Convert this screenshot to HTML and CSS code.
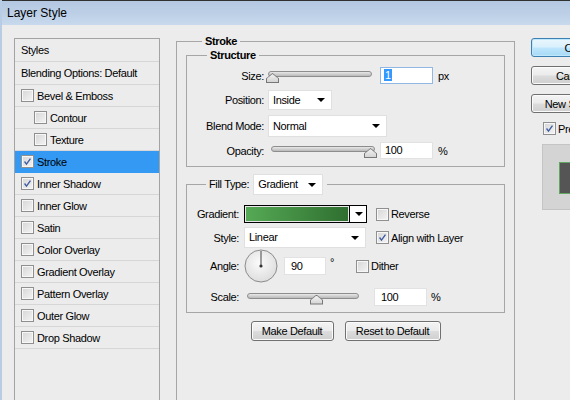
FILE: index.html
```html
<!DOCTYPE html>
<html>
<head>
<meta charset="utf-8">
<title>Layer Style</title>
<link rel="stylesheet" href="styles.css">
</head>
<body>
<div class="window">
  <div class="titlebar">Layer Style</div>
  <div class="content">
    <div class="styles-list">
      <div class="item head first">Styles</div>
      <div class="item head">Blending Options: Default</div>
      <div class="item"><span class="cb"></span>Bevel &amp; Emboss</div>
      <div class="item sub"><span class="cb"></span>Contour</div>
      <div class="item sub"><span class="cb"></span>Texture</div>
      <div class="item selected"><span class="cb checked"><svg viewBox="0 0 13 13"><path d="M3 6.5 L5.3 9.5 L10 3" fill="none" stroke="#3d5ca0" stroke-width="1.6"/></svg></span>Stroke</div>
      <div class="item"><span class="cb checked"><svg viewBox="0 0 13 13"><path d="M3 6.5 L5.3 9.5 L10 3" fill="none" stroke="#3d5ca0" stroke-width="1.6"/></svg></span>Inner Shadow</div>
      <div class="item"><span class="cb"></span>Inner Glow</div>
      <div class="item"><span class="cb"></span>Satin</div>
      <div class="item"><span class="cb"></span>Color Overlay</div>
      <div class="item"><span class="cb"></span>Gradient Overlay</div>
      <div class="item"><span class="cb"></span>Pattern Overlay</div>
      <div class="item"><span class="cb"></span>Outer Glow</div>
      <div class="item"><span class="cb"></span>Drop Shadow</div>
    </div>

    <div class="main">
      <fieldset class="group stroke">
        <legend class="legend-stroke">Stroke</legend>
        <fieldset class="group structure">
          <legend class="legend-structure">Structure</legend>
          <div class="row r-size">
            <span class="lbl lbl-s">Size:</span>
            <div class="slider sl-size"><span class="track"></span><span class="thumb thumb-min"></span></div>
            <span class="field f-size focused"><span class="sel-text">1</span></span>
            <span class="unit">px</span>
          </div>
          <div class="row r-pos">
            <span class="lbl lbl-s">Position:</span>
            <span class="select s-pos">Inside<span class="arrow"></span></span>
          </div>
          <div class="row r-blend">
            <span class="lbl lbl-s">Blend Mode:</span>
            <span class="select s-blend">Normal<span class="arrow"></span></span>
          </div>
          <div class="row r-op">
            <span class="lbl lbl-s">Opacity:</span>
            <div class="slider sl-op"><span class="track"></span><span class="thumb thumb-max"></span></div>
            <span class="field f-op">100</span>
            <span class="unit">%</span>
          </div>
        </fieldset>

        <fieldset class="group fill">
          <legend class="legend-fill"><span class="fill-lbl">Fill Type:</span><span class="select s-fill">Gradient<span class="arrow"></span></span></legend>
          <div class="row r-grad">
            <span class="lbl lbl-f">Gradient:</span>
            <span class="gradient"><span class="grad-swatch"></span><span class="grad-btn"><span class="arrow"></span></span></span>
            <span class="check-opt"><span class="cb"></span>Reverse</span>
          </div>
          <div class="row r-style">
            <span class="lbl lbl-f">Style:</span>
            <span class="select s-style">Linear<span class="arrow"></span></span>
            <span class="check-opt"><span class="cb checked"><svg viewBox="0 0 13 13"><path d="M3 6.5 L5.3 9.5 L10 3" fill="none" stroke="#3d5ca0" stroke-width="1.6"/></svg></span>Align with Layer</span>
          </div>
          <div class="row r-angle">
            <span class="lbl lbl-f">Angle:</span>
            <span class="dial"><svg viewBox="0 0 34 34" width="34" height="34"><defs><radialGradient id="dg" cx="0.45" cy="0.4" r="0.7"><stop offset="0" stop-color="#fbfbfb"/><stop offset="1" stop-color="#d9d9d9"/></radialGradient></defs><circle cx="17" cy="17" r="16" fill="url(#dg)" stroke="#8c8c8c"/><line x1="17" y1="17" x2="17" y2="2" stroke="#444" stroke-width="1"/><circle cx="17" cy="17" r="1.6" fill="#333"/></svg></span>
            <span class="field f-angle">90</span>
            <span class="deg">°</span>
            <span class="check-opt dither"><span class="cb"></span>Dither</span>
          </div>
          <div class="row r-scale">
            <span class="lbl lbl-f">Scale:</span>
            <div class="slider sl-scale"><span class="track"></span><span class="thumb thumb-scale"></span></div>
            <span class="field f-scale">100</span>
            <span class="unit">%</span>
          </div>
        </fieldset>

        <div class="btnrow">
          <button class="btn b-make">Make Default</button>
          <button class="btn b-reset">Reset to Default</button>
        </div>
      </fieldset>
    </div>

    <div class="side">
      <button class="btn side-btn ok">OK</button>
      <button class="btn side-btn">Cancel</button>
      <button class="btn side-btn">New Style...</button>
      <div class="preview-check"><span class="cb checked"><svg viewBox="0 0 13 13"><path d="M3 6.5 L5.3 9.5 L10 3" fill="none" stroke="#3d5ca0" stroke-width="1.6"/></svg></span>Preview</div>
      <div class="preview-box"><span class="preview-swatch"></span></div>
    </div>
  </div>
</div>
</body>
</html>
```

FILE: styles.css
```css
* { box-sizing: border-box; }
html, body {
  margin: 0;
  padding: 0;
  width: 570px;
  height: 400px;
  overflow: hidden;
  background: #ececec;
  font-family: "Liberation Sans", Arial, sans-serif;
  font-size: 11px;
  letter-spacing: -0.35px;
  color: #000;
}
.window {
  width: 570px;
  height: 400px;
  display: flex;
  flex-direction: column;
  border-left: 2px solid #b8cce4;
  background: #ececec;
  overflow: hidden;
}
.titlebar {
  flex: none;
  height: 25px;
  border-top: 1px solid #303030;
  background: linear-gradient(to bottom, #b3c8e1 0%, #bccfe6 50%, #c8d9ed 100%);
  font-family: "Liberation Sans", Arial, sans-serif;
  font-size: 12px;
  letter-spacing: 0;
  line-height: 24px;
  padding-left: 5px;
  color: #000;
}
.content {
  flex: 1;
  display: flex;
  align-items: flex-start;
  min-height: 0;
}

/* left list */
.styles-list {
  flex: none;
  width: 146px;
  height: 362px;
  margin-left: 12px;
  margin-top: 13px;
  border: 1px solid #a3a3a3;
  border-bottom: 0;
}
.item {
  height: 22px;
  border-bottom: 1px solid #d6d6d6;
  display: flex;
  align-items: center;
  padding-left: 6px;
  white-space: nowrap;
}
.item.head { height: 23px; }
.item.sub { padding-left: 19px; }
.item.selected { background: #3399f3; border-bottom-color: #3399f3; }
.cb {
  flex: none;
  width: 13px;
  height: 13px;
  border: 1px solid #8f8f8f;
  background: linear-gradient(135deg, #d6d6d6 0%, #f4f4f4 100%);
  box-shadow: inset 0 0 0 1px #f7f7f7;
  margin-right: 3px;
  display: inline-block;
}
.cb svg { width: 11px; height: 11px; display: block; }
.item .cb { margin-right: 3px; }

/* main */
.main {
  flex: none;
  margin-left: 16px;
  margin-top: 10px;
  width: 339px;
}
fieldset.group {
  margin: 0;
  border: 1px solid #a6a6a6;
  min-width: 0;
}
legend {
  font-weight: bold;
  font-size: 11px;
  line-height: 13px;
  padding: 0 3px;
}
.stroke {
  padding: 1px 9px 0 9px;
  height: 380px;
}
.legend-stroke { margin-left: 16px; }
.structure {
  padding: 5px 0 7px 0;
}
.legend-structure { margin-left: 20px; }
.fill {
  margin-top: 7px !important;
  padding: 10px 0 6px 0;
}
.legend-fill {
  margin-left: 19px;
  font-weight: normal;
  display: flex;
  align-items: center;
  padding: 0 4px 0 3px;
}
.fill-lbl { margin-right: 4px; }

.row {
  display: flex;
  align-items: center;
}
.lbl { text-align: right; flex: none; white-space: nowrap; }
.lbl-s { width: 77px; margin-right: 4px; }
.lbl-f { width: 52px; margin-right: 5px; }

.r-size { height: 17px; }
.r-pos { height: 20px; margin-top: 6px; }
.r-blend { height: 22px; margin-top: 5px; }
.r-op { height: 17px; margin-top: 5px; }

.slider {
  position: relative;
  flex: none;
  height: 17px;
}
.track {
  position: absolute;
  left: 0;
  right: 0;
  top: 4px;
  height: 6px;
  border: 1px solid #8d8d8d;
  border-radius: 3px;
  background: linear-gradient(to bottom, #e8e8e8, #b9b9b9);
}
.thumb {
  position: absolute;
  top: 6px;
  width: 13px;
  height: 10px;
}
.thumb::before {
  content: "";
  position: absolute;
  inset: 0;
  background: #777;
  clip-path: polygon(50% 0, 100% 55%, 100% 100%, 0 100%, 0 55%);
}
.thumb::after {
  content: "";
  position: absolute;
  inset: 1px;
  background: linear-gradient(to bottom, #f2f2f2, #d4d4d4);
  clip-path: polygon(50% 0, 100% 55%, 100% 100%, 0 100%, 0 55%);
}
.sl-size { width: 104px; }
.thumb-min { left: -2px; }
.sl-op { width: 104px; margin-left: 3px; margin-right: -3px; }
.thumb-max { right: -2px; }
.sl-scale { width: 112px; margin-left: 3px; }
.thumb-scale { left: 63px; }

.field {
  flex: none;
  height: 17px;
  background: #fff;
  border: 1px solid #e2e2e2;
  padding-left: 4px;
  line-height: 15px;
}
.f-size { width: 53px; margin-left: 8px; border-color: #8fb8e5; }
.sel-text { background: #3399ff; color: #fff; padding: 0 1px; margin-left: -1px; }
.f-op { width: 53px; margin-left: 8px; }
.unit { margin-left: 5px; }

.select {
  flex: none;
  position: relative;
  background: #fff;
  border: 1px solid #e0e0e0;
  height: 20px;
  line-height: 18px;
  padding-left: 4px;
  display: inline-block;
}
.arrow {
  position: absolute;
  right: 6px;
  top: 50%;
  margin-top: -2px;
  width: 0;
  height: 0;
  border-left: 4px solid transparent;
  border-right: 4px solid transparent;
  border-top: 4px solid #000;
}
.s-pos { width: 64px; }
.s-blend { width: 119px; height: 22px; line-height: 20px; }
.s-fill { width: 70px; height: 21px; line-height: 19px; }
.s-style { width: 122px; height: 21px; line-height: 19px; }

.r-grad { height: 18px; }
.r-style { height: 21px; margin-top: 4px; }
.r-angle { height: 34px; margin-top: 1px; }
.r-scale { height: 18px; margin-top: 5px; }

.gradient {
  flex: none;
  width: 123px;
  height: 18px;
  border: 1px solid #000;
  background: #fff;
  display: flex;
}
.grad-swatch {
  flex: 1;
  border: 1px solid #e8e8e8;
  background: linear-gradient(to right, #55a955, #2f6f30);
}
.grad-btn {
  flex: none;
  width: 17px;
  border-left: 1px solid #000;
  position: relative;
  background: #fff;
}
.grad-btn .arrow { right: 3px; }

.check-opt {
  display: flex;
  align-items: center;
  white-space: nowrap;
  margin-left: 9px;
}
.check-opt .cb { margin-right: 2px; }
.r-style .check-opt { margin-left: 10px; }

.dial { flex: none; width: 34px; height: 34px; display: block; }
.dial svg { display: block; }
.f-angle { width: 42px; height: 18px; margin-left: 6px; line-height: 16px; padding-left: 6px; }
.deg { margin-left: 4px; margin-top: -8px; }
.dither { margin-left: 22px; }
.f-scale { width: 53px; height: 18px; margin-left: 15px; line-height: 16px; padding-left: 6px; }
.r-scale .unit { margin-left: 4px; }

.btnrow {
  display: flex;
  justify-content: center;
  gap: 11px;
  margin-top: 8px;
}
.btn {
  font-family: "Liberation Sans", Arial, sans-serif;
  font-size: 11px;
  letter-spacing: -0.35px;
  height: 20px;
  border: 1px solid #707070;
  border-radius: 3px;
  background: linear-gradient(to bottom, #f4f4f4 0%, #ebebeb 48%, #dcdcdc 52%, #cfcfcf 100%);
  box-shadow: inset 0 0 0 1px #fbfbfb;
  padding: 0;
  color: #000;
  cursor: default;
}
.b-make { width: 83px; }
.b-reset { width: 96px; }

/* right side */
.side {
  flex: none;
  margin-left: 16px;
  margin-top: 13px;
  width: 39px;
  overflow: hidden;
  display: flex;
  flex-direction: column;
  align-items: flex-start;
}
.side-btn { flex: none; width: 82px; height: 19px; margin-bottom: 9px; }
.side-btn.ok {
  border-color: #3c7fb1;
  background: linear-gradient(to bottom, #eaf6fd 0%, #d9f0fc 48%, #bee6fd 52%, #a7d9f5 100%);
  box-shadow: inset 0 0 0 1px #bfe7fb;
}
.preview-check {
  display: flex;
  align-items: center;
  margin-left: 12px;
  height: 13px;
  white-space: nowrap;
}
.preview-check .cb { margin-right: 2px; }
.preview-box {
  flex: none;
  margin-top: 9px;
  margin-left: 11px;
  width: 70px;
  height: 66px;
  background: #d4d4d4;
  border: 1px solid #c4c4c4;
  padding-top: 17px;
  padding-left: 16px;
}
.preview-swatch {
  display: block;
  width: 32px;
  height: 32px;
  background: #555;
  border: 1px solid #5fa85f;
}
```
